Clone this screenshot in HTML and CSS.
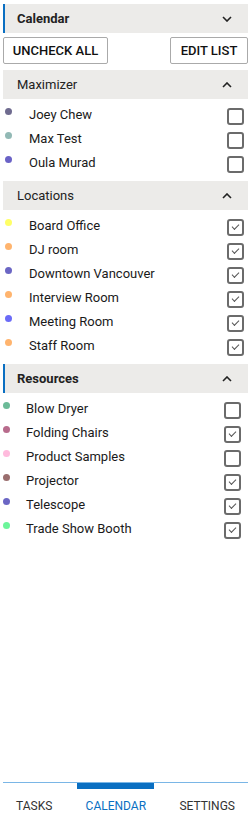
FILE: index.html
```html
<!DOCTYPE html>
<html>
<head>
  <title>Calendar</title>
  <link rel="stylesheet" href="styles.css">
</head>
<body>
  <main>
    <div class="panel-header active">
      <span class="panel-title bold">Calendar</span>
      <svg class="chevron" width="10" height="6" viewBox="0 0 10 6"><path d="M1 1 L5 5 L9 1" fill="none" stroke="#222" stroke-width="1.6"/></svg>
    </div>

    <div class="toolbar">
      <button class="tool-button">UNCHECK ALL</button>
      <button class="tool-button">EDIT LIST</button>
    </div>

    <div class="panel-header">
      <span class="panel-title">Maximizer</span>
      <svg class="chevron" width="10" height="6" viewBox="0 0 10 6"><path d="M1 5 L5 1 L9 5" fill="none" stroke="#222" stroke-width="1.6"/></svg>
    </div>
    <ul class="cal-list">
      <li><span class="dot" style="background:#6f6b8f"></span><span class="name">Joey Chew</span><span class="box"></span></li>
      <li><span class="dot" style="background:#92b9b5"></span><span class="name">Max Test</span><span class="box"></span></li>
      <li><span class="dot" style="background:#6a62c6"></span><span class="name">Oula Murad</span><span class="box"></span></li>
    </ul>

    <div class="panel-header">
      <span class="panel-title">Locations</span>
      <svg class="chevron" width="10" height="6" viewBox="0 0 10 6"><path d="M1 5 L5 1 L9 5" fill="none" stroke="#222" stroke-width="1.6"/></svg>
    </div>
    <ul class="cal-list">
      <li><span class="dot" style="background:#ffff66"></span><span class="name">Board Office</span><span class="box checked"></span></li>
      <li><span class="dot" style="background:#ffb46e"></span><span class="name">DJ room</span><span class="box checked"></span></li>
      <li><span class="dot" style="background:#6b66c4"></span><span class="name">Downtown Vancouver</span><span class="box checked"></span></li>
      <li><span class="dot" style="background:#ffb46e"></span><span class="name">Interview Room</span><span class="box checked"></span></li>
      <li><span class="dot" style="background:#6b6bf7"></span><span class="name">Meeting Room</span><span class="box checked"></span></li>
      <li><span class="dot" style="background:#ffb46e"></span><span class="name">Staff Room</span><span class="box checked"></span></li>
    </ul>

    <div class="panel-header active">
      <span class="panel-title bold">Resources</span>
      <svg class="chevron" width="10" height="6" viewBox="0 0 10 6"><path d="M1 5 L5 1 L9 5" fill="none" stroke="#222" stroke-width="1.6"/></svg>
    </div>
    <ul class="cal-list resources">
      <li><span class="dot" style="background:#6cbb98"></span><span class="name">Blow Dryer</span><span class="box"></span></li>
      <li><span class="dot" style="background:#b86b8c"></span><span class="name">Folding Chairs</span><span class="box checked"></span></li>
      <li><span class="dot" style="background:#ffbbdd"></span><span class="name">Product Samples</span><span class="box"></span></li>
      <li><span class="dot" style="background:#9a6e6e"></span><span class="name">Projector</span><span class="box checked"></span></li>
      <li><span class="dot" style="background:#6b66c4"></span><span class="name">Telescope</span><span class="box checked"></span></li>
      <li><span class="dot" style="background:#6cf59a"></span><span class="name">Trade Show Booth</span><span class="box checked"></span></li>
    </ul>
  </main>

  <footer>
    <div class="tab-line">
      <span class="tab-marker"></span>
    </div>
    <nav class="tabs">
      <span class="tab">TASKS</span>
      <span class="tab selected">CALENDAR</span>
      <span class="tab">SETTINGS</span>
    </nav>
  </footer>
</body>
</html>
```

FILE: styles.css
```css
/* Reset default margin and padding */
body, ul, li {
  margin: 0;
  padding: 0;
}

body {
  background-color: #fff;
  font-family: Roboto, "Liberation Sans", sans-serif;
  font-size: 13px;
  color: #1a1a1a;
  display: flex;
  flex-direction: column;
  min-height: 100vh;
}

main {
  flex: 1;
  padding: 4px 3px 0 3px;
}

/* Section headers */
.panel-header {
  display: flex;
  align-items: center;
  justify-content: space-between;
  height: 29px;
  background-color: #ecebe9;
  padding: 0 16px 0 12px;
  border-left: 2px solid transparent;
}

.panel-header.active {
  border-left-color: #0a6fc2;
}

.panel-title {
  font-size: 13px;
  color: #222;
}

.panel-title.bold {
  font-weight: bold;
}

/* Buttons */
.toolbar {
  display: flex;
  justify-content: space-between;
  padding: 4px 0 6px 0;
}

.tool-button {
  height: 27px;
  background: #fff;
  border: 1px solid #aaa;
  border-radius: 2px;
  font-family: Roboto, "Liberation Sans", sans-serif;
  font-size: 13px;
  font-weight: 500;
  color: #111;
  padding: 0;
  white-space: nowrap;
}

.tool-button:first-child {
  width: 105px;
}

.tool-button:last-child {
  width: 78px;
}

/* Calendar lists */
.cal-list {
  list-style: none;
  padding: 3px 0 7px 0;
}

.cal-list li {
  display: flex;
  align-items: center;
  height: 24px;
}

.dot {
  width: 7px;
  height: 7px;
  border-radius: 50%;
  margin: -6px 0 0 2px;
  flex-shrink: 0;
}

.name {
  flex: 1;
  margin-left: 17px;
}

.box {
  width: 13px;
  height: 13px;
  border: 2px solid #6b6b6b;
  border-radius: 3px;
  margin: 5px 4px 0 0;
  position: relative;
}

.box.checked::after {
  content: "";
  position: absolute;
  left: 3px;
  top: 3px;
  width: 6px;
  height: 3px;
  border-left: 1.5px solid #555;
  border-bottom: 1.5px solid #555;
  transform: rotate(-45deg);
}

.resources .dot {
  margin-left: 0;
}

.resources .name {
  margin-left: 16px;
}

.resources .box {
  margin-right: 7px;
}

/* Bottom tabs */
footer {
  padding: 0 3px;
}

.tab-line {
  border-top: 1px solid #7ab6e6;
  height: 6px;
  padding-left: 74px;
}

.tab-marker {
  display: block;
  width: 77px;
  height: 6px;
  background-color: #0a6fc2;
}

.tabs {
  display: flex;
  justify-content: space-between;
  height: 34px;
  align-items: center;
  padding: 0 13px;
}

.tab {
  font-size: 12px;
  color: #333;
}

.tab.selected {
  color: #0a6fc2;
}
```
